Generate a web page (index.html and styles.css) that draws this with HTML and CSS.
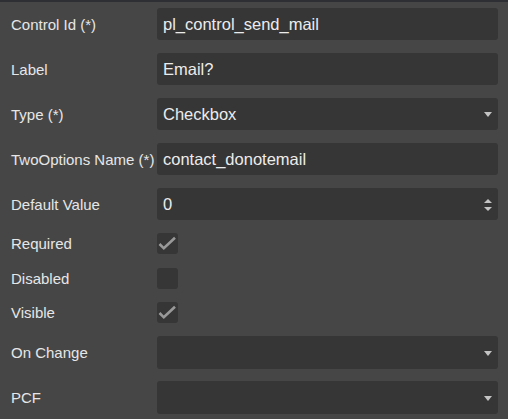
FILE: index.html
```html
<!DOCTYPE html>
<html>
<head>
<meta charset="utf-8">
<link rel="stylesheet" href="styles.css">
</head>
<body>
<div class="panel">
  <div class="row">
    <div class="label">Control Id (*)</div>
    <div class="field">pl_control_send_mail</div>
  </div>
  <div class="row">
    <div class="label">Label</div>
    <div class="field">Email?</div>
  </div>
  <div class="row">
    <div class="label">Type (*)</div>
    <div class="field select">Checkbox<span class="caret"></span></div>
  </div>
  <div class="row">
    <div class="label">TwoOptions Name (*)</div>
    <div class="field">contact_donotemail</div>
  </div>
  <div class="row">
    <div class="label">Default Value</div>
    <div class="field number">0<span class="spin"><span class="up"></span><span class="down"></span></span></div>
  </div>
  <div class="row check-row">
    <div class="label">Required</div>
    <div class="check"><svg width="21" height="21" viewBox="0 0 21 21"><path d="M2.5 11 L6.8 15.3 L18 4.8" fill="none" stroke="#999999" stroke-width="2.6"/></svg></div>
  </div>
  <div class="row check-row">
    <div class="label">Disabled</div>
    <div class="check"></div>
  </div>
  <div class="row check-row">
    <div class="label">Visible</div>
    <div class="check"><svg width="21" height="21" viewBox="0 0 21 21"><path d="M2.5 11 L6.8 15.3 L18 4.8" fill="none" stroke="#999999" stroke-width="2.6"/></svg></div>
  </div>
  <div class="row">
    <div class="label">On Change</div>
    <div class="field select tall"><span class="caret"></span></div>
  </div>
  <div class="row">
    <div class="label">PCF</div>
    <div class="field select tall"><span class="caret"></span></div>
  </div>
</div>
</body>
</html>
```
FILE: styles.css
```css
html, body {
  margin: 0;
  padding: 0;
  background: #464646;
}
body {
  font-family: "Liberation Sans", Arial, sans-serif;
  border-top: 2px solid #2d2f35;
  width: 508px;
  height: 417px;
  overflow: hidden;
}
.panel {
  display: flex;
  flex-direction: column;
  gap: 13px;
  padding: 6px 10px 0 11px;
}
.row {
  display: flex;
  align-items: center;
  height: 32px;
}
.row.check-row {
  height: 21.5px;
}
.label {
  width: 146px;
  flex: none;
  font-size: 15px;
  color: #e6e6e6;
  white-space: nowrap;
}
.field {
  position: relative;
  flex: 1;
  height: 32px;
  box-sizing: border-box;
  background: #363636;
  border-radius: 3px;
  padding-left: 6px;
  display: flex;
  align-items: center;
  font-size: 16.5px;
  color: #ececec;
}
.field.tall {
  height: 33px;
}
.caret {
  position: absolute;
  right: 6px;
  top: 50%;
  margin-top: -2px;
  width: 0;
  height: 0;
  border-left: 4.5px solid transparent;
  border-right: 4.5px solid transparent;
  border-top: 5px solid #c4c4c4;
}
.spin {
  position: absolute;
  right: 6px;
  top: 11px;
  display: flex;
  flex-direction: column;
  gap: 4px;
}
.spin .up {
  width: 0;
  height: 0;
  border-left: 4.5px solid transparent;
  border-right: 4.5px solid transparent;
  border-bottom: 4px solid #c4c4c4;
}
.spin .down {
  width: 0;
  height: 0;
  border-left: 4.5px solid transparent;
  border-right: 4.5px solid transparent;
  border-top: 4px solid #c4c4c4;
}
.check {
  width: 21px;
  height: 21px;
  background: #363636;
  border-radius: 3px;
}
.check svg {
  display: block;
}
```
